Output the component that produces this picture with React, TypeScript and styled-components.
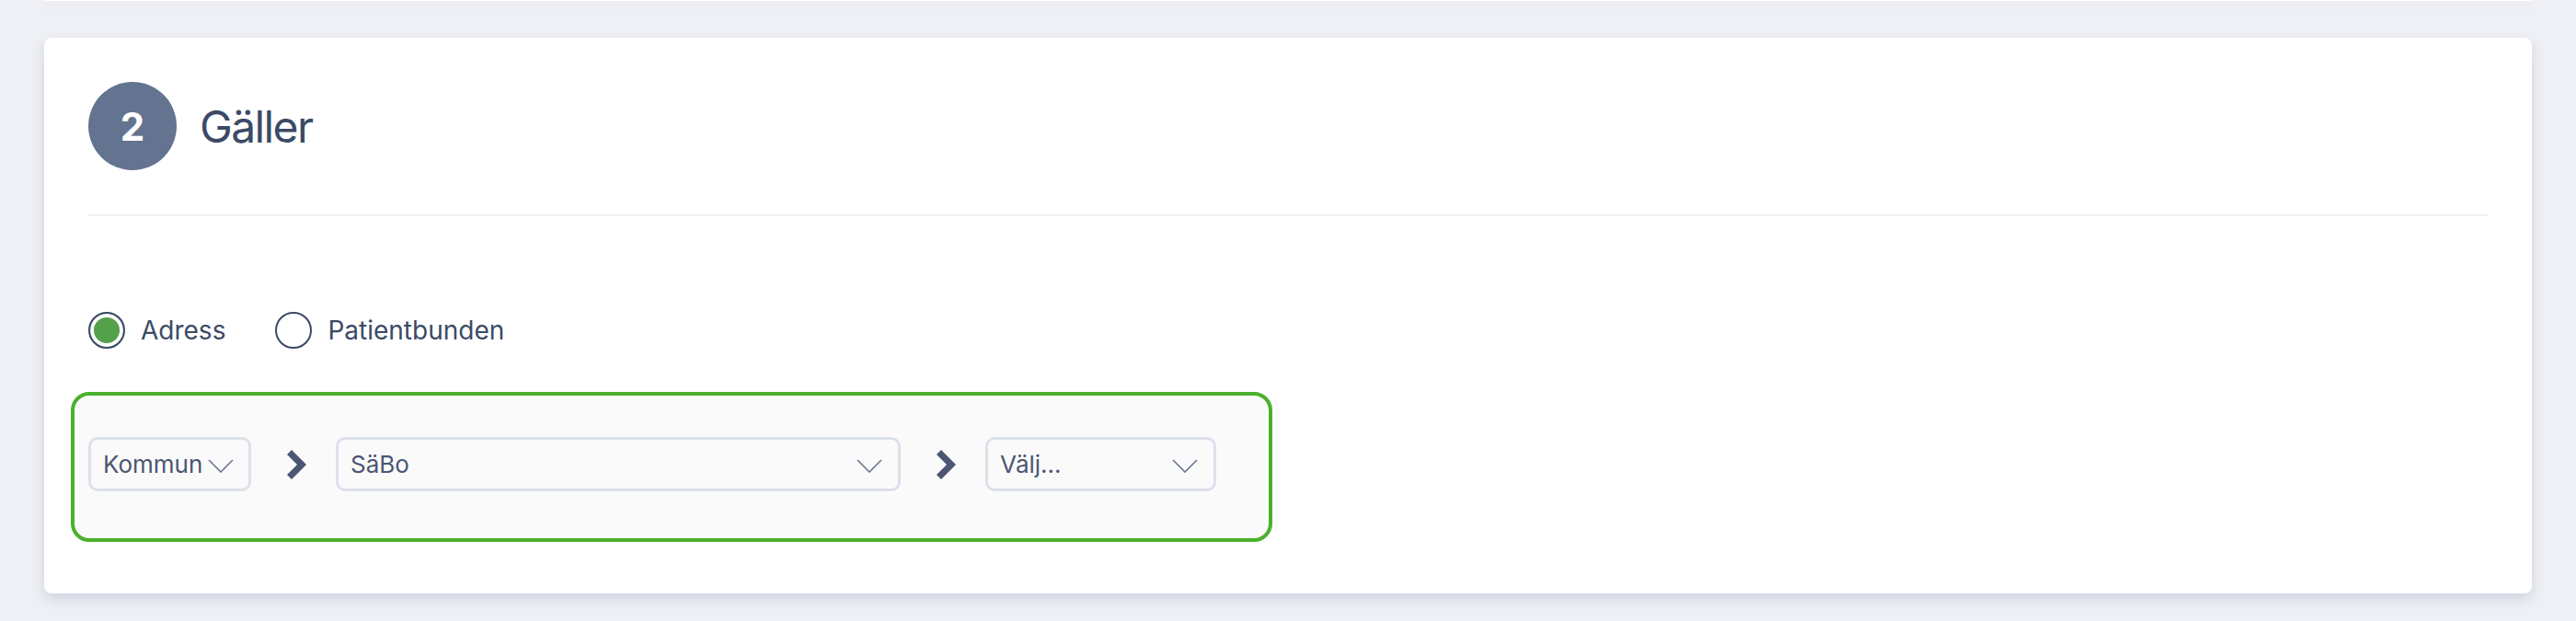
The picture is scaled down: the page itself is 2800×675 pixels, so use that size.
import styled, { createGlobalStyle } from 'styled-components'

const GlobalStyle = createGlobalStyle`
  body {
    margin: 0;
    background: #eff0f5;
    font-family: Inter, 'Noto Sans', sans-serif;
    color: #3b4a66;
  }
`

const Page = styled.div`
  padding: 0 48px 29px;
`

// bottom edge of the previous step, scrolled mostly out of view
const PrevCard = styled.div`
  height: 1px;
  background: #fff;
  border-radius: 0 0 8px 8px;
  box-shadow: 0 4px 12px rgba(150, 158, 188, 0.3);
  margin-bottom: 40px;
`

const Card = styled.section`
  background: #fff;
  border-radius: 8px;
  padding: 48px 48px 56px;
  box-shadow: 0 6px 14px rgba(150, 158, 188, 0.35);
`

const CardHeader = styled.header`
  display: flex;
  align-items: center;
  gap: 25px;
  padding-bottom: 48px;
  border-bottom: 2px solid #eeeff3;
`

const StepBadge = styled.div`
  width: 96px;
  height: 96px;
  border-radius: 50%;
  background: #637390;
  color: #fff;
  display: flex;
  align-items: center;
  justify-content: center;
  font-size: 42px;
  font-weight: 700;
`

const Title = styled.h2`
  margin: 0;
  font-size: 48px;
  font-weight: 400;
  letter-spacing: -1.6px;
  color: #3b4a66;
`

const RadioGroup = styled.div`
  display: flex;
  gap: 54px;
  margin-top: 104px;
`

const RadioLabel = styled.label`
  display: flex;
  align-items: center;
  gap: 17px;
  font-size: 28px;
  color: #3b4a66;
`

const RadioInput = styled.input.attrs({ type: 'radio' })`
  appearance: none;
  margin: 0;
  width: 40px;
  height: 40px;
  border-radius: 50%;
  border: 2px solid #3b4a66;
  background: #fff;
  box-sizing: border-box;

  &:checked {
    background: #55a04b;
    box-shadow: inset 0 0 0 4px #fff;
  }
`

const PathBox = styled.div`
  margin: 47px 0 0 -19px;
  width: 1306px;
  box-sizing: border-box;
  border: 4px solid #4bb02d;
  border-radius: 20px;
  background: #fafafa;
  padding: 45px 0 51px 15px;
  display: flex;
  align-items: center;
`

const SelectBox = styled.div<{ $width: number }>`
  width: ${(p) => p.$width}px;
  height: 59px;
  box-sizing: border-box;
  border: 3px solid #dde1eb;
  border-radius: 10px;
  background: #fafafb;
  padding: 0 17px 0 13px;
  display: flex;
  align-items: center;
  justify-content: space-between;
  gap: 6px;
  font-size: 26px;
  color: #4a5672;
  white-space: nowrap;

  svg {
    flex-shrink: 0;
    margin-top: 3px;
  }
`

const Separator = styled.svg`
  margin: 0 32px 0 39px;
  flex-shrink: 0;
`

const ChevronDown = () => (
  <svg width="28" height="15" viewBox="0 0 28 15">
    <polyline
      points="1,1 14,14 27,1"
      fill="none"
      stroke="#6b7892"
      strokeWidth="1.6"
    />
  </svg>
)

const Select = ({ value, width }: { value: string; width: number }) => (
  <SelectBox $width={width}>
    <span>{value}</span>
    <ChevronDown />
  </SelectBox>
)

const Arrow = () => (
  <Separator width="21" height="32" viewBox="0 0 21 32">
    <polygon points="0,5 5,0 21,16 5,32 0,27 11,16" fill="#4a5672" />
  </Separator>
)

export default function App() {
  return (
    <>
      <GlobalStyle />
      <Page>
        <PrevCard />
        <Card>
          <CardHeader>
            <StepBadge>2</StepBadge>
            <Title>Gäller</Title>
          </CardHeader>
          <RadioGroup>
            <RadioLabel>
              <RadioInput name="scope" defaultChecked />
              Adress
            </RadioLabel>
            <RadioLabel>
              <RadioInput name="scope" />
              Patientbunden
            </RadioLabel>
          </RadioGroup>
          <PathBox>
            <Select value="Kommun" width={177} />
            <Arrow />
            <Select value="SäBo" width={614} />
            <Arrow />
            <Select value="Välj..." width={251} />
          </PathBox>
        </Card>
      </Page>
    </>
  )
}
